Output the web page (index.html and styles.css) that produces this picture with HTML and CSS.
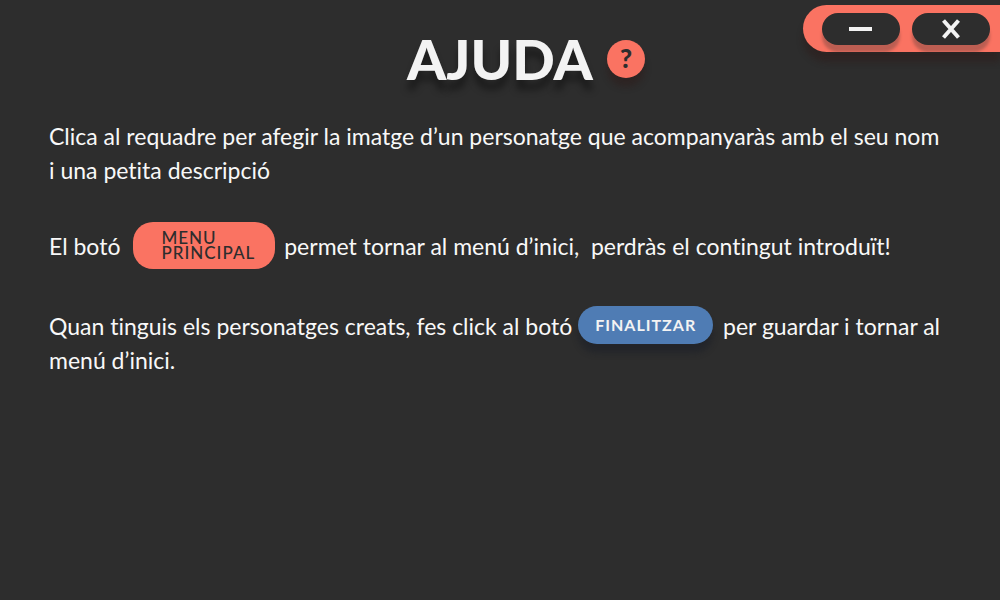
FILE: index.html
```
<!DOCTYPE html>
<html lang="ca">
<head>
<meta charset="utf-8">
<meta name="viewport" content="width=device-width, initial-scale=1">
<title>Ajuda</title>
<link rel="stylesheet" href="styles.css">
</head>
<body>
<div class="window-controls">
  <button class="control" type="button" aria-label="Minimitza">
    <svg class="control-icon" viewBox="0 0 24 24" aria-hidden="true"><path d="M0 12H23" stroke-width="4"/></svg>
  </button>
  <button class="control" type="button" aria-label="Tanca">
    <svg class="control-icon" viewBox="0 0 24 24" aria-hidden="true"><path d="M4.5 3.5L19.5 20.5M19.5 3.5L4.5 20.5" stroke-width="4"/></svg>
  </button>
</div>
<main class="help">
  <header class="help-header">
    <h1 class="title">AJUDA</h1>
    <span class="badge" aria-hidden="true">?</span>
  </header>
  <p class="text">Clica al requadre per afegir la imatge d’un personatge que acompanyaràs amb el seu nom<br>i una petita descripció</p>
  <div class="text row">
    <span>El botó</span>
    <button class="menu-button" type="button">MENU<br>PRINCIPAL</button>
    <span>permet tornar al menú d’inici,&nbsp; perdràs el contingut introduït!</span>
  </div>
  <p class="text last">Quan tinguis els personatges creats, fes click al botó <button class="finish-button" type="button">FINALITZAR</button> per guardar i tornar al<br>menú d’inici.</p>
</main>
</body>
</html>
```
FILE: styles.css
```
* {
  box-sizing: border-box;
}

body {
  margin: 0;
  background: #2d2d2d;
  color: #f8f8f8;
  font-family: Lato, sans-serif;
}

button {
  border: 0;
  padding: 0;
  cursor: pointer;
}

.window-controls {
  position: absolute;
  top: 5px;
  right: 0;
  display: flex;
  gap: 12px;
  padding: 8px 10px 7px 19px;
  border-radius: 24px 0 0 24px;
  background: #fa7362;
  box-shadow: 0 10px 6px rgba(45, 20, 18, 0.35);
}

.control {
  display: flex;
  align-items: center;
  justify-content: center;
  width: 78px;
  height: 32px;
  border-radius: 16px;
  background: #2d2d2d;
  box-shadow: 0 7px 3px rgba(45, 45, 45, 0.3);
}

.control-icon {
  width: 24px;
  height: 24px;
  fill: none;
  stroke: #f3f3f3;
}

.help {
  padding: 24px 24px 24px 49px;
}

.help-header {
  display: flex;
  align-items: center;
  justify-content: center;
  gap: 14px;
  padding-left: 27px;
}

.title {
  margin: 0;
  font: 900 56px/70px Lato, sans-serif;
  color: #f3f3f3;
  text-shadow: 0 10px 7px rgba(0, 0, 0, 0.4);
}

.badge {
  width: 38px;
  height: 38px;
  border-radius: 50%;
  background: #fa7362;
  box-shadow: 0 9px 6px rgba(45, 20, 18, 0.35);
  color: #2d2d2d;
  font: 900 26px/36px Lato, sans-serif;
  text-align: center;
}

.text {
  margin: 25px 0 0;
  font-size: 23px;
  font-variant-ligatures: none;
  line-height: 34px;
}

.row {
  display: flex;
  align-items: center;
  margin-top: 35px;
}

.menu-button {
  margin: 0 9px 0 13px;
  padding: 8px 20px 9px 28px;
  border-radius: 20px;
  background: #fa7362;
  color: #2d2d2d;
  font: 500 17px/15px Lato, sans-serif;
  letter-spacing: 1px;
  text-align: left;
}

.last {
  margin-top: 40px;
}

.finish-button {
  height: 38px;
  margin: -8px 4px -8px 0;
  padding: 0 17px;
  border-radius: 19px;
  background: #4f7cb4;
  box-shadow: 0 9px 6px rgba(20, 26, 38, 0.4);
  color: #f3f3f3;
  font: 700 16px/38px Lato, sans-serif;
  letter-spacing: 1px;
  vertical-align: 4px;
}
```
